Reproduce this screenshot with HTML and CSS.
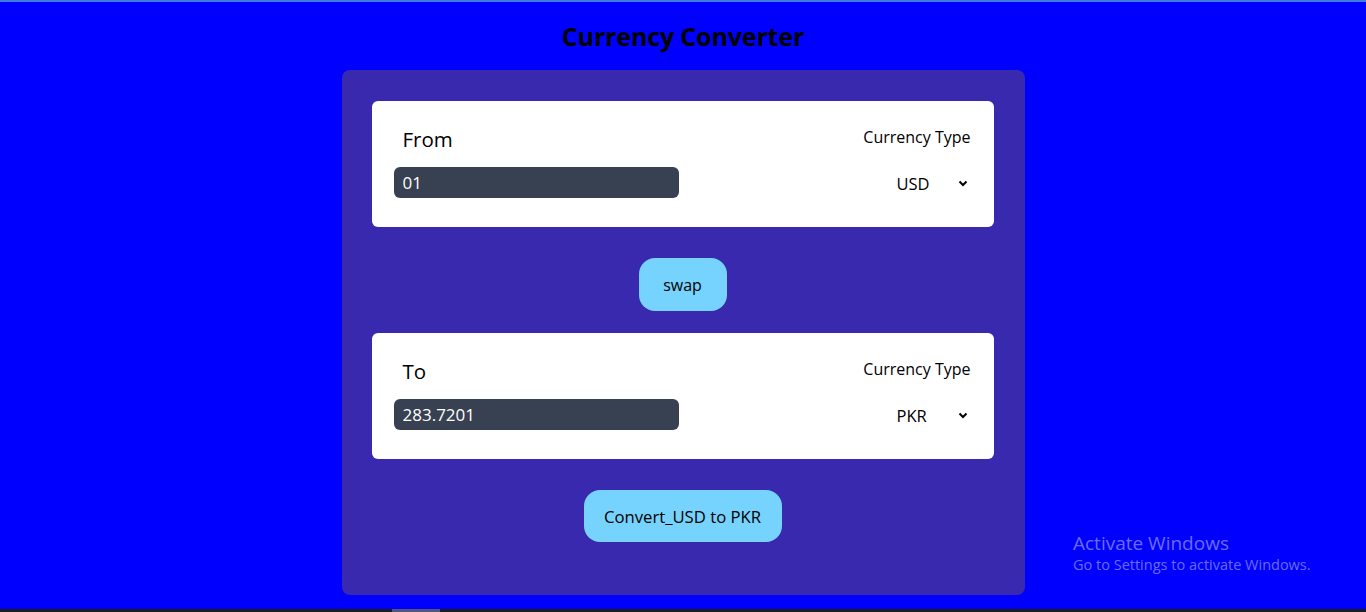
FILE: index.html
```html
<!DOCTYPE html>
<html lang="en">
<head>
<meta charset="utf-8">
<title>Currency Converter</title>
<link rel="stylesheet" href="styles.css">
</head>
<body>
<div class="topline"></div>
<main class="page">
  <h1 class="title">Currency Converter</h1>
  <section class="card">
    <div class="box">
      <div class="col-left">
        <label class="field-label">From</label>
        <input class="amount" type="text" value="01">
      </div>
      <div class="col-right">
        <span class="type-label">Currency Type</span>
        <div class="select">
          <span class="select-value">USD</span>
          <svg class="chev" width="10" height="7" viewBox="0 0 10 7"><path d="M1.5 1.5 L5 5 L8.5 1.5" fill="none" stroke="#000" stroke-width="2"/></svg>
        </div>
      </div>
    </div>
    <div class="btn-row swap-row">
      <button class="btn swap">swap</button>
    </div>
    <div class="box">
      <div class="col-left">
        <label class="field-label">To</label>
        <input class="amount" type="text" value="283.7201">
      </div>
      <div class="col-right">
        <span class="type-label">Currency Type</span>
        <div class="select">
          <span class="select-value">PKR</span>
          <svg class="chev" width="10" height="7" viewBox="0 0 10 7"><path d="M1.5 1.5 L5 5 L8.5 1.5" fill="none" stroke="#000" stroke-width="2"/></svg>
        </div>
      </div>
    </div>
    <div class="btn-row convert-row">
      <button class="btn convert">Convert_USD to PKR</button>
    </div>
  </section>
</main>
<div class="watermark">
  <div class="wm-title">Activate Windows</div>
  <div class="wm-sub">Go to Settings to activate Windows.</div>
</div>
<div class="taskbar"><span class="task-item"></span></div>
</body>
</html>
```
FILE: styles.css
```css
* { box-sizing: border-box; }
html, body { margin: 0; height: 100%; }
body {
  background: #0000ff;
  font-family: "Open Sans", "Noto Sans", sans-serif;
  color: #000;
  overflow: hidden;
  position: relative;
}
.topline { height: 2px; background: #3f7ddb; }
.page { display: flex; flex-direction: column; align-items: center; }
.title {
  margin: 0;
  height: 68px;
  padding-top: 18px;
  font-size: 25px;
  font-weight: 700;
  line-height: 32px;
  letter-spacing: -0.15px;
}
.card {
  width: 683px;
  background: #3829ae;
  border-radius: 8px;
  padding: 31px 31px 53px 30px;
  display: flex;
  flex-direction: column;
}
.box {
  background: #fff;
  border-radius: 6px;
  height: 126px;
  padding: 0 23px 0 22px;
  display: flex;
  justify-content: space-between;
}
.col-left { display: flex; flex-direction: column; padding-top: 24px; }
.field-label { font-size: 20.5px; line-height: 28px; padding-left: 9px; height: 42px; }
.amount {
  width: 285px;
  height: 31px;
  border: none;
  border-radius: 6px;
  background: #374151;
  color: #fff;
  font-family: inherit;
  font-size: 17px;
  padding: 0 9px;
  outline: none;
}
.col-right { display: flex; flex-direction: column; align-items: flex-end; padding-top: 24px; }
.type-label { font-size: 16px; line-height: 24px; height: 44px; }
.select { display: flex; align-items: center; height: 28px; }
.select-value { font-size: 16.5px; width: 61px; }
.chev { margin-right: 3px; }
.btn-row { display: flex; justify-content: center; }
.swap-row { padding: 31px 0 22px; }
.convert-row { padding-top: 31px; }
.btn {
  background: #76d3fd;
  border: none;
  border-radius: 16px;
  font-family: inherit;
  font-size: 16px;
  color: #000;
  height: 53px;
  padding: 0 24px;
}
.swap { width: 88px; padding: 0; }
.convert { height: 52px; width: 198px; padding: 0; font-size: 16.7px; }
.watermark {
  position: absolute;
  left: 1073px;
  top: 531px;
  color: rgba(200, 200, 230, 0.55);
}
.wm-title { font-size: 19px; line-height: 24px; }
.wm-sub { font-size: 14.5px; line-height: 20px; }
.taskbar {
  position: absolute;
  left: 0; right: 0; bottom: 0;
  height: 3px;
  background: #1c1c1c;
}
.task-item { display: block; margin-left: 392px; width: 48px; height: 3px; background: #55557a; }
```
